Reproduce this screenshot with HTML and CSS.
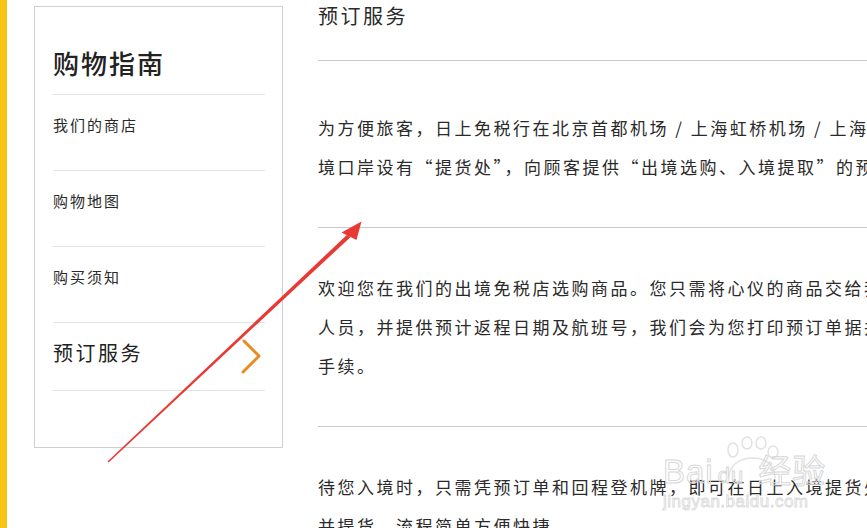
FILE: index.html
```html
<!DOCTYPE html>
<html lang="zh-CN">
<head>
    <meta charset="UTF-8">
    <meta name="viewport" content="width=device-width, initial-scale=1.0">
    <title>预订服务 - 购物指南</title>
    <link rel="stylesheet" href="styles.css">
</head>
<body>

    <!-- gelber Rand links -->
    <div class="edge"></div>

    <!-- Seitenmenü -->
    <div class="sidebar">
        <h2 class="sidebar-title">购物指南</h2>
        <ul class="menu">
            <li>我们的商店</li>
            <li>购物地图</li>
            <li>购买须知</li>
            <li class="active">
                预订服务
                <svg class="chevron" width="22" height="36" viewBox="0 0 22 36">
                    <polyline points="3,2 18,17 2,33" fill="none" stroke="#ea8a1f" stroke-width="3" stroke-linecap="round" stroke-linejoin="round"/>
                </svg>
            </li>
        </ul>
    </div>

    <!-- Inhalt -->
    <div class="content">
        <h3 class="content-title">预订服务</h3>
        <div class="section first">
            <p>为方便旅客，日上免税行在北京首都机场 / 上海虹桥机场 / 上海浦东机场等入<br>境口岸设有“提货处”，向顾客提供“出境选购、入境提取”的预订服务。</p>
        </div>
        <div class="section">
            <p>欢迎您在我们的出境免税店选购商品。您只需将心仪的商品交给我们的销售<br>人员，并提供预计返程日期及航班号，我们会为您打印预订单据并办理相关<br>手续。</p>
        </div>
        <div class="section">
            <p>待您入境时，只需凭预订单和回程登机牌，即可在日上入境提货处付款<br>并提货，流程简单方便快捷。</p>
        </div>
    </div>

    <!-- Wasserzeichen -->
    <div class="watermark">
        <svg class="paw" width="64" height="44" viewBox="0 0 64 44">
            <g fill="none" stroke="#e2e2e2" stroke-width="1.5">
                <ellipse cx="10" cy="14" rx="5" ry="7"/>
                <ellipse cx="24" cy="7" rx="5" ry="6"/>
                <ellipse cx="38" cy="7" rx="5" ry="6"/>
                <ellipse cx="50" cy="16" rx="5" ry="6"/>
                <path d="M6 42 C6 28 18 22 30 22 C42 22 52 28 52 42"/>
            </g>
        </svg>
        <div class="wm-main"><span>Bai</span><span class="wm-du">du</span><span>经验</span></div>
        <div class="wm-url">jingyan.baidu.com</div>
    </div>

    <!-- roter Pfeil -->
    <svg class="arrow" width="867" height="528" viewBox="0 0 867 528">
        <polygon points="107.5,461.5 108.6,462.4 350.4,237.2 347.6,234.2" fill="#e83a35"/>
        <polygon points="361.5,221.5 341.5,232.5 356.5,240" fill="#e83a35"/>
    </svg>

</body>
</html>
```

FILE: styles.css
```css
body {
    font-family: "Noto Sans CJK SC", "Noto Sans", sans-serif;
    background-color: #fff;
    color: #333;
    margin: 0;
    display: flex;
    align-items: flex-start;
    height: 100vh;
    overflow: hidden;
}
.edge {
    width: 7px;
    height: 100%;
    flex-shrink: 0;
    background-color: #f7c416;
}
.sidebar {
    width: 212px;
    flex-shrink: 0;
    margin: 6px 0 0 27px;
    padding: 0 17px 56px 18px;
    border: 1px solid #cfcfcf;
}
.sidebar-title {
    margin: 0;
    padding: 39px 0 14px;
    font-size: 26px;
    line-height: 34px;
    font-weight: 500;
    letter-spacing: 2px;
    color: #222;
    border-bottom: 1px solid #e2e2e2;
}
.menu {
    list-style-type: none;
    margin: 0;
    padding: 0;
}
.menu li {
    position: relative;
    height: 76px;
    box-sizing: border-box;
    padding-top: 19px;
    font-size: 15px;
    line-height: 22px;
    letter-spacing: 2px;
    color: #2a2a2a;
    border-bottom: 1px solid #e2e2e2;
}
.menu li.active {
    height: 68px;
    font-size: 20px;
    letter-spacing: 2.5px;
    color: #222;
}
.chevron {
    position: absolute;
    right: 2px;
    top: 16px;
}
.content {
    flex: 1;
    min-width: 0;
    margin-left: 35px;
    overflow: hidden;
}
.content-title {
    margin: 0;
    padding: 2px 0 30px;
    font-size: 20px;
    line-height: 28px;
    font-weight: normal;
    letter-spacing: 2.5px;
    color: #2a2a2a;
}
.section {
    border-top: 1px solid #cccccc;
    padding: 40px 0 41px;
}
.section.first {
    padding-top: 47px;
}
.section p {
    margin: 0;
    font-size: 17px;
    line-height: 39px;
    letter-spacing: 2.5px;
    white-space: nowrap;
    color: #2a2a2a;
}
.watermark {
    position: absolute;
    left: 663px;
    top: 436px;
    width: 170px;
    pointer-events: none;
}
.paw {
    position: absolute;
    left: 60px;
    top: 0;
}
.wm-main {
    position: relative;
    padding-top: 20px;
    font-family: "Liberation Sans", "Noto Sans CJK SC", sans-serif;
    font-size: 33px;
    line-height: 32px;
    letter-spacing: 1px;
    color: transparent;
    -webkit-text-stroke: 1px #d8d8d8;
}
.wm-du {
    font-size: 22px;
    margin: 0 14px 0 4px;
}
.wm-url {
    font-family: "Liberation Sans", sans-serif;
    font-size: 17px;
    line-height: 20px;
    letter-spacing: 0.5px;
    color: transparent;
    -webkit-text-stroke: 0.8px #d8d8d8;
}
.arrow {
    position: absolute;
    left: 0;
    top: 0;
    pointer-events: none;
}
```
